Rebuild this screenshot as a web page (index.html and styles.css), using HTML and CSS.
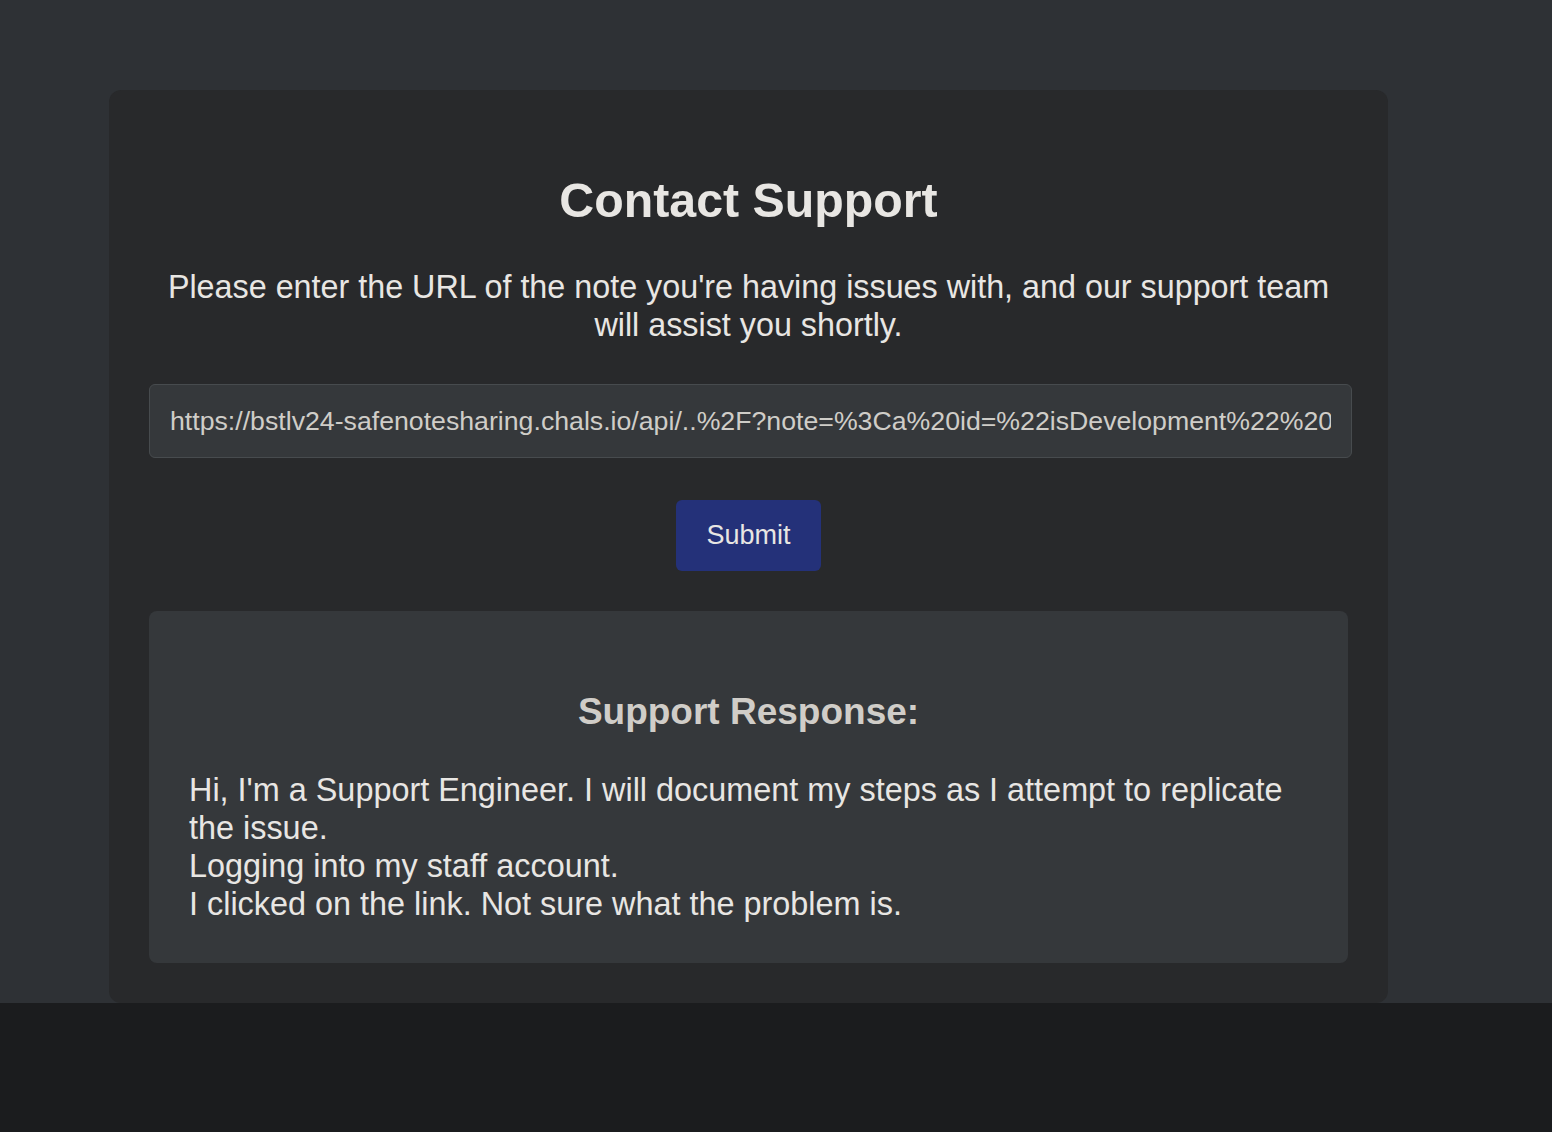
FILE: index.html
```html
<!DOCTYPE html>
<html lang="en">
<head>
<meta charset="utf-8">
<title>Contact Support</title>
<link rel="stylesheet" href="styles.css">
</head>
<body>
  <main class="card">
    <h1 class="title">Contact Support</h1>
    <p class="intro">Please enter the URL of the note you're having issues with, and our support team will assist you shortly.</p>
    <form class="form">
      <input class="url-input" type="text" value="https://bstlv24-safenotesharing.chals.io/api/..%2F?note=%3Ca%20id=%22isDevelopment%22%20">
      <button class="submit" type="button">Submit</button>
    </form>
    <section class="response">
      <h3 class="response-title">Support Response:</h3>
      <p class="response-text">Hi, I'm a Support Engineer. I will document my steps as I attempt to replicate the issue.<br>Logging into my staff account.<br>I clicked on the link. Not sure what the problem is.</p>
    </section>
  </main>
</body>
</html>
```
FILE: styles.css
```css
html {
  background: #1b1c1e;
}
body {
  margin: 0;
  padding: 90px 0 0 0;
  background: #2e3135;
  font-family: "Liberation Sans", Arial, Helvetica, sans-serif;
  color: #e8e6e3;
}
.card {
  margin-left: 109px;
  width: 1279px;
  box-sizing: border-box;
  padding: 40px;
  background: #28292b;
  border-radius: 12px;
  text-align: center;
}
.title {
  margin: 42px 0 0 0;
  font-size: 48.3px;
  line-height: 56px;
  font-weight: 700;
  color: #e8e6e3;
}
.intro {
  margin: 40px 0 0 0;
  font-size: 32.3px;
  line-height: 38px;
}
.form {
  margin: 40px 0 0 0;
  display: flex;
  flex-direction: column;
  align-items: center;
  gap: 42px;
}
.url-input {
  box-sizing: border-box;
  width: calc(100% + 4px);
  margin-right: -4px;
  height: 74px;
  padding: 0 20px;
  background: #35383b;
  border: 1px solid #474b4e;
  border-radius: 6px;
  color: #cfcdc8;
  font-family: "Liberation Sans", Arial, Helvetica, sans-serif;
  font-size: 26.7px;
  outline: none;
}
.submit {
  height: 71px;
  padding: 0 30px;
  background: #243179;
  border: none;
  border-radius: 6px;
  color: #e8e6e3;
  font-family: "Liberation Sans", Arial, Helvetica, sans-serif;
  font-size: 27px;
}
.response {
  margin-top: 40px;
  padding: 40px;
  background: #35383b;
  border-radius: 8px;
  text-align: left;
}
.response-title {
  margin: 39px 0 0 0;
  font-size: 37px;
  line-height: 44px;
  font-weight: 700;
  color: #d0cdc8;
  text-align: center;
}
.response-text {
  margin: 37px 0 0 0;
  font-size: 32.4px;
  line-height: 38px;
}
```
